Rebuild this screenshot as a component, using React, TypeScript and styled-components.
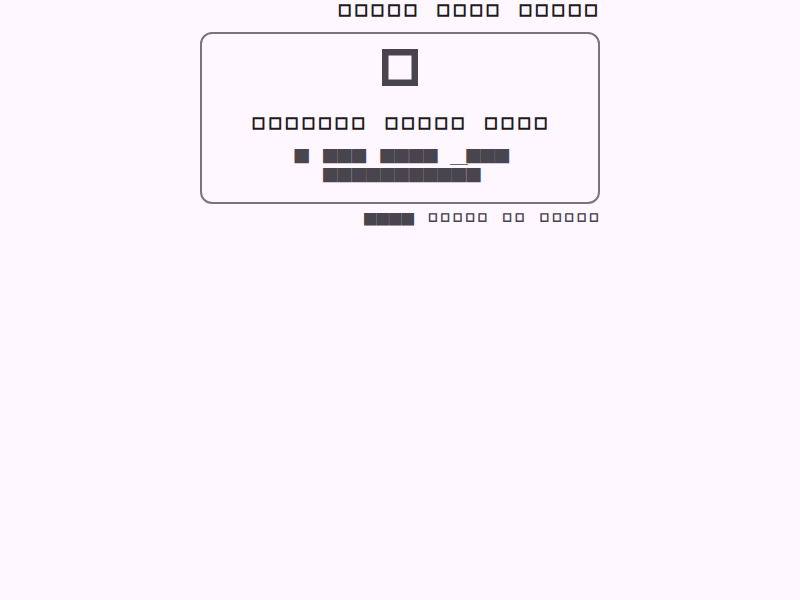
import React from "react";
import styled, { createGlobalStyle } from "styled-components";

const GlobalStyle = createGlobalStyle`
  html, body { margin: 0; padding: 0; background: #fef7ff; }
  body { font-family: "Noto Sans CJK SC", "Noto Sans", sans-serif; }
  * { box-sizing: border-box; }
`;

const Page = styled.main`
  width: 400px;
  margin: 0 auto;
  display: flex;
  flex-direction: column;
`;

const NavBar = styled.nav`
  display: flex;
  justify-content: flex-end;
  gap: 16.42px;
  height: 20px;
  margin-right: -1px;
`;

const NavLink = styled.a`
  font-size: 13px;
  line-height: 20px;
  font-weight: 700;
  letter-spacing: 3.42px;
  color: #1d1b20;
  -webkit-text-stroke: 1.3px #1d1b20;
  text-decoration: none;
  white-space: nowrap;
  cursor: pointer;
`;

const Card = styled.section`
  margin-top: 12px;
  border: 2px solid #79747e;
  border-radius: 12px;
  padding: 15px 24px 18px;
  display: flex;
  flex-direction: column;
  align-items: center;
`;

const Icon = styled.svg`
  display: block;
  width: 36px;
  height: 37px;
  color: #49454f;
`;

const Title = styled.h2`
  margin: 25px 0 0;
  padding-left: 3px;
  font-size: 13px;
  line-height: 24px;
  font-weight: 700;
  letter-spacing: 3.6px;
  color: #1d1b20;
  -webkit-text-stroke: 1.3px #1d1b20;
  text-align: center;
  white-space: nowrap;
`;

const Description = styled.p`
  margin: 11px 0 0;
  font-size: 17.9px;
  line-height: 19px;
  font-weight: 400;
  letter-spacing: -3.58px;
  color: #49454f;
  text-align: center;
`;

const Hint = styled.p`
  margin: 6px -2px 0 0;
  display: flex;
  justify-content: flex-end;
  align-items: center;
  gap: 16px;
  color: #49454f;
`;

const HintStrong = styled.strong`
  font-size: 15.6px;
  line-height: 16px;
  font-weight: 400;
  letter-spacing: -3.1px;
`;

const HintText = styled.span`
  font-size: 8.8px;
  line-height: 16px;
  font-weight: 700;
  letter-spacing: 3.6px;
  -webkit-text-stroke: 1px #49454f;
  white-space: nowrap;
`;

const SP = "\u3000";

export default function App() {
  return (
    <>
      <GlobalStyle />
      <Page>
        <NavBar>
          <NavLink>□□□□□</NavLink>
          <NavLink>□□□□</NavLink>
          <NavLink>□□□□□</NavLink>
        </NavBar>
        <Card>
          <Icon viewBox="0 0 36 37" aria-hidden="true">
            <rect x="3.25" y="3.25" width="29.5" height="30.5" fill="none" stroke="currentColor" strokeWidth="6.5" />
          </Icon>
          <Title>{`□□□□□□□${SP}□□□□□${SP}□□□□`}</Title>
          <Description>
            {`■${SP}■■■${SP}■■■■${SP}＿■■■`}
            <br />
            {"■■■■■■■■■■■"}
          </Description>
        </Card>
        <Hint>
          <HintStrong>■■■■</HintStrong>
          <HintText>{`□□□□□${SP}□□${SP}□□□□□`}</HintText>
        </Hint>
      </Page>
    </>
  );
}
